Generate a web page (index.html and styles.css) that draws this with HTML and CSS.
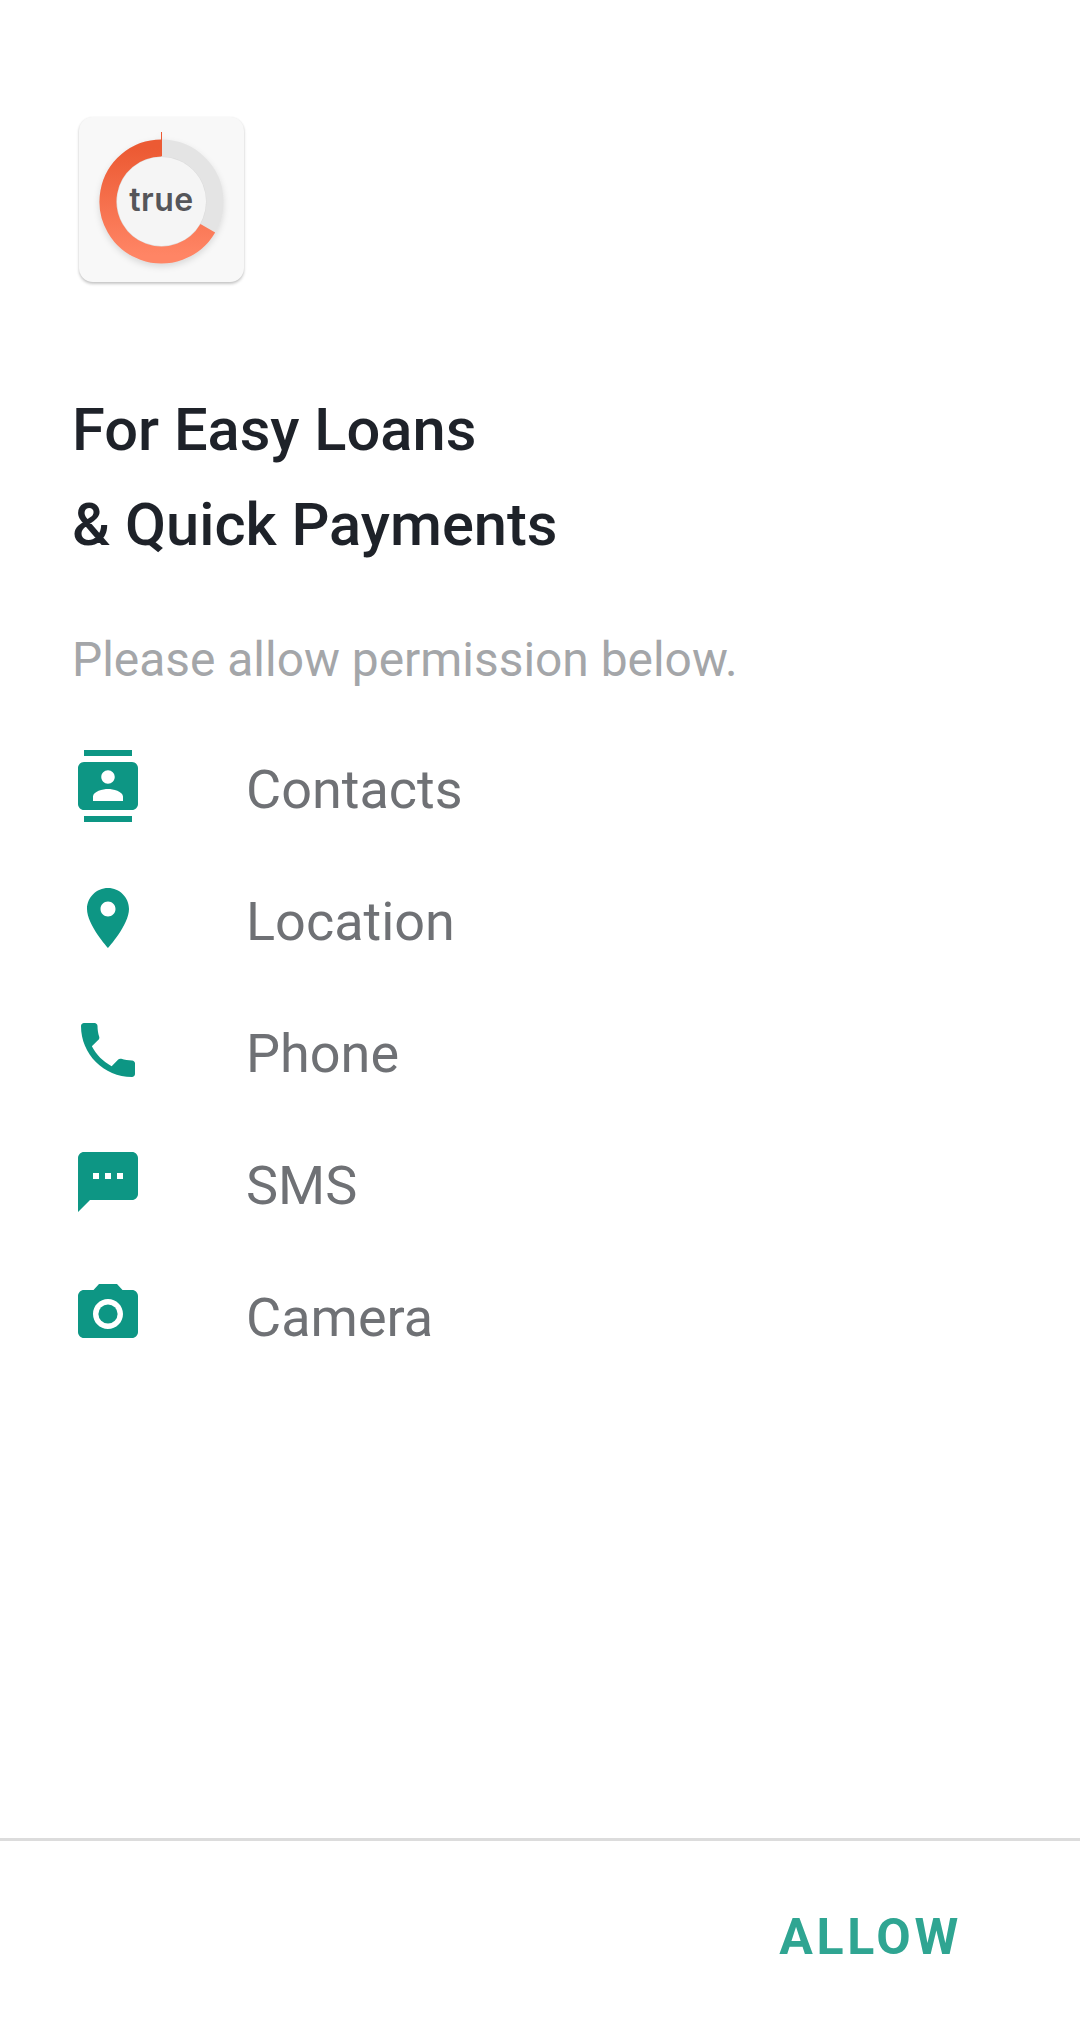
FILE: index.html
```html
<!DOCTYPE html>
<html lang="en">
<head>
<meta charset="utf-8">
<title>True Balance permissions</title>
<link rel="stylesheet" href="styles.css">
</head>
<body>
<div class="page">
  <main class="content">
    <div class="logo">
      <svg class="logo-ring" viewBox="0 0 125 125" width="125" height="125" aria-hidden="true">
        <defs>
          <linearGradient id="ringGrad" x1="0" y1="0" x2="0" y2="1">
            <stop offset="0" stop-color="#ec5a33"/>
            <stop offset="1" stop-color="#ff8565"/>
          </linearGradient>
        </defs>
        <circle cx="62.5" cy="62.5" r="44.5" fill="#f5f5f5"/>
        <circle cx="62.5" cy="62.5" r="53.500" fill="none" stroke="#e4e4e4" stroke-width="17"/>
        <path d="M62.5 9A53.500 53.500 0 1 0 108.800 89.250" fill="none" stroke="url(#ringGrad)" stroke-width="17"/>
        <path d="M62.5 -7V17" stroke="#ec5a33" stroke-width="1" fill="none"/>
      </svg>
      <span class="logo-text">true</span>
    </div>
    <h1 class="title">For Easy Loans<br>&amp; Quick Payments</h1>
    <p class="subtitle">Please allow permission below.</p>
    <ul class="perms">
      <li class="perm">
        <svg class="perm-icon" viewBox="0 0 24 24"><path d="M20 0H4v2h16V0zM4 24h16v-2H4v2zM20 4H4c-1.1 0-2 .9-2 2v12c0 1.1.9 2 2 2h16c1.1 0 2-.9 2-2V6c0-1.1-.9-2-2-2zm-8 2.750c1.240 0 2.250 1.010 2.250 2.250s-1.010 2.250-2.250 2.250S9.750 10.240 9.750 9 10.760 6.750 12 6.750zM17 17H7v-1.500c0-1.670 3.330-2.500 5-2.500s5 .83 5 2.500V17z"/></svg>
        <span class="perm-label">Contacts</span>
      </li>
      <li class="perm">
        <svg class="perm-icon" viewBox="0 0 24 24"><path d="M12 2C8.130 2 5 5.130 5 9c0 5.250 7 13 7 13s7-7.750 7-13c0-3.870-3.130-7-7-7zm0 9.500c-1.380 0-2.500-1.120-2.500-2.500s1.120-2.500 2.500-2.500 2.500 1.120 2.500 2.500-1.120 2.500-2.500 2.500z"/></svg>
        <span class="perm-label">Location</span>
      </li>
      <li class="perm">
        <svg class="perm-icon" viewBox="0 0 24 24"><path d="M6.620 10.790c1.440 2.830 3.760 5.140 6.590 6.590l2.200-2.200c.27-.27.67-.36 1.020-.24 1.120.37 2.330.57 3.570.57.55 0 1 .45 1 1V20c0 .55-.45 1-1 1-9.390 0-17-7.610-17-17 0-.55.45-1 1-1h3.500c.55 0 1 .45 1 1 0 1.250.2 2.450.57 3.570.11.35.03.74-.25 1.020l-2.200 2.200z"/></svg>
        <span class="perm-label">Phone</span>
      </li>
      <li class="perm">
        <svg class="perm-icon" viewBox="0 0 24 24"><path d="M20 2H4c-1.100 0-1.990.9-1.990 2L2 22l4-4h14c1.100 0 2-.9 2-2V4c0-1.100-.9-2-2-2zM9 11H7V9h2v2zm4 0h-2V9h2v2zm4 0h-2V9h2v2z"/></svg>
        <span class="perm-label">SMS</span>
      </li>
      <li class="perm">
        <svg class="perm-icon" viewBox="0 0 24 24"><circle cx="12" cy="12" r="3.200"/><path d="M9 2L7.170 4H4c-1.100 0-2 .9-2 2v12c0 1.100.9 2 2 2h16c1.100 0 2-.9 2-2V6c0-1.100-.9-2-2-2h-3.170L15 2H9zm3 15c-2.760 0-5-2.240-5-5s2.240-5 5-5 5 2.240 5 5-2.240 5-5 5z"/></svg>
        <span class="perm-label">Camera</span>
      </li>
    </ul>
  </main>
  <footer class="footer">
    <button class="allow" type="button">ALLOW</button>
  </footer>
</div>
</body>
</html>
```
FILE: styles.css
```css
* { box-sizing: border-box; }
html, body { margin: 0; padding: 0; background: #fff; }
body { font-family: Roboto, "Liberation Sans", sans-serif; }
.page { display: flex; flex-direction: column; height: 2020px; overflow: hidden; }
.content { flex: 1; padding: 117px 0 0 72px; }
.logo {
  position: relative;
  width: 165px; height: 165px;
  margin-left: 7px;
  padding: 3px 0 0 0;
  display: flex; align-items: center; justify-content: center;
  background: #f8f8f8;
  border-radius: 14px;
  box-shadow: 0 2px 3px rgba(0,0,0,.22), 0 0 2px rgba(0,0,0,.06);
}
.logo-ring { display: block; overflow: visible; filter: drop-shadow(0 3px 3px rgba(0,0,0,.12)); }
.logo-text {
  position: absolute; left: 0; right: 0; top: 63px;
  text-align: center;
  font-family: Inter, sans-serif;
  font-weight: 600; font-size: 32px; line-height: 40px;
  letter-spacing: 0.5px;
  color: #55565a;
}
.title {
  margin: 101px 0 0;
  font-size: 59.6px; line-height: 95px; font-weight: 500;
  color: #1e2229;
}
.subtitle {
  margin: 55px 0 0;
  font-size: 47.9px; line-height: 64px; font-weight: 400;
  color: #a4a6a9;
}
.perms { list-style: none; margin: 58px 0 0; padding: 0; display: flex; flex-direction: column; gap: 60px; }
.perm { display: flex; align-items: center; gap: 102px; height: 72px; }
.perm-icon { width: 72px; height: 72px; flex: none; fill: #0d9684; }
.perm-label { font-size: 54px; line-height: 72px; color: #6f7175; position: relative; top: 4px; }
.footer { height: 182px; border-top: 3px solid #dcdcdc; display: flex; justify-content: flex-end; padding: 68px 118px 0 0; }
.allow {
  border: 0; background: none; padding: 0; height: 56px;
  font-family: Roboto, sans-serif; font-weight: 700; font-size: 50px; line-height: 56px;
  letter-spacing: 3.7px; color: #2fa592;
}
```
